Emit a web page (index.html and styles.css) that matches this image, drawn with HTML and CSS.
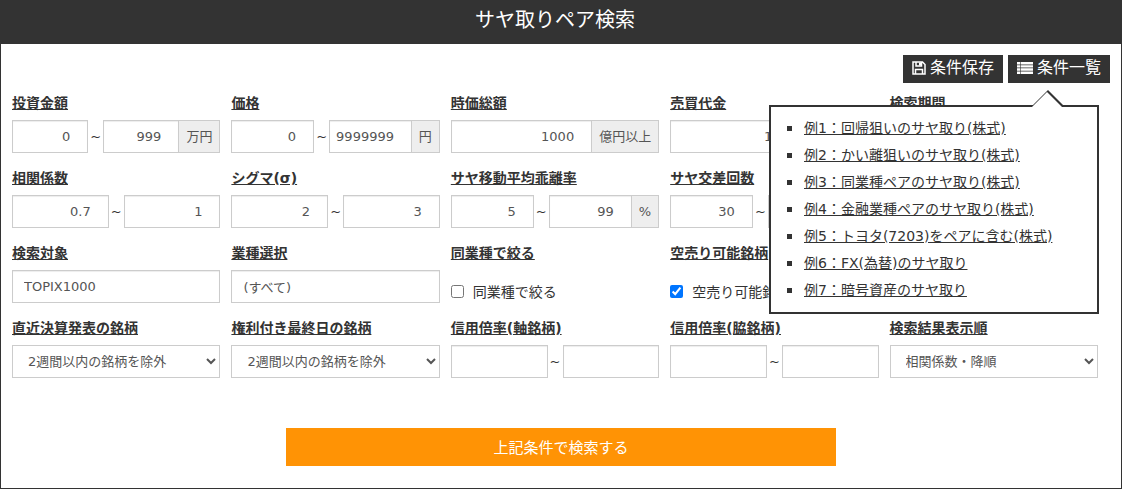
FILE: index.html
```
<!DOCTYPE html>
<html lang="ja">
<head>
  <meta charset="UTF-8">
  <meta name="viewport" content="width=device-width, initial-scale=1.0">
  <title>サヤ取りペア検索</title>
  <link rel="stylesheet" href="styles.css">
</head>
<body>
  <form class="panel">
    <h1 class="panel-title">サヤ取りペア検索</h1>

    <div class="toolbar">
      <button type="button" class="tool-btn">
        <svg class="icon-save" viewBox="0 0 14 14" aria-hidden="true">
          <path d="M1 1h9.500L13 3.500V13H1z M4 1v4h5.500V1 M3.500 13V8.500h7V13" fill="none" stroke="currentColor" stroke-width="1.500"/>
          <path d="M7 1.500h2v3H7z" fill="currentColor"/>
        </svg>
        条件保存
      </button>
      <div class="menu">
        <button type="button" class="tool-btn" aria-expanded="true">
          <svg class="icon-list" viewBox="0 0 16 12" aria-hidden="true">
            <path d="M0 0h3v2.500H0z M3.600 0H16v2.500H3.600z M0 3.200h3v2.400H0z M3.600 3.200H16v2.400H3.600z M0 6.300h3v2.400H0z M3.600 6.300H16v2.400H3.600z M0 9.400h3V12H0z M3.600 9.400H16V12H3.600z" fill="currentColor"/>
          </svg>
          条件一覧
        </button>
        <ul class="popup">
          <li><a href="#">例1：回帰狙いのサヤ取り(株式)</a></li>
          <li><a href="#">例2：かい離狙いのサヤ取り(株式)</a></li>
          <li><a href="#">例3：同業種ペアのサヤ取り(株式)</a></li>
          <li><a href="#">例4：金融業種ペアのサヤ取り(株式)</a></li>
          <li><a href="#">例5：トヨタ(7203)をペアに含む(株式)</a></li>
          <li><a href="#">例6：FX(為替)のサヤ取り</a></li>
          <li><a href="#">例7：暗号資産のサヤ取り</a></li>
        </ul>
      </div>
    </div>

    <div class="row">
      <div class="field">
        <label class="caption" for="amount-min">投資金額</label>
        <div class="group">
          <input class="control num" id="amount-min" type="text" value="0">
          <span class="tilde">~</span>
          <input class="control num" type="text" value="999" aria-label="投資金額 上限">
          <span class="unit">万円</span>
        </div>
      </div>
      <div class="field">
        <label class="caption" for="price-min">価格</label>
        <div class="group">
          <input class="control num" id="price-min" type="text" value="0">
          <span class="tilde">~</span>
          <input class="control num" type="text" value="9999999" aria-label="価格 上限">
          <span class="unit">円</span>
        </div>
      </div>
      <div class="field">
        <label class="caption" for="cap">時価総額</label>
        <div class="group">
          <input class="control num" id="cap" type="text" value="1000">
          <span class="unit">億円以上</span>
        </div>
      </div>
      <div class="field">
        <label class="caption" for="turnover">売買代金</label>
        <div class="group">
          <input class="control num" id="turnover" type="text" value="10">
          <span class="unit">百万円以上</span>
        </div>
      </div>
      <div class="field">
        <label class="caption" for="period">検索期間</label>
        <select class="control" id="period">
          <option>1年</option>
        </select>
      </div>
    </div>

    <div class="row">
      <div class="field">
        <label class="caption" for="corr-min">相関係数</label>
        <div class="group">
          <input class="control num" id="corr-min" type="text" value="0.7">
          <span class="tilde">~</span>
          <input class="control num" type="text" value="1" aria-label="相関係数 上限">
        </div>
      </div>
      <div class="field">
        <label class="caption" for="sigma-min">シグマ(σ)</label>
        <div class="group">
          <input class="control num" id="sigma-min" type="text" value="2">
          <span class="tilde">~</span>
          <input class="control num" type="text" value="3" aria-label="シグマ 上限">
        </div>
      </div>
      <div class="field">
        <label class="caption" for="gap-min">サヤ移動平均乖離率</label>
        <div class="group">
          <input class="control num" id="gap-min" type="text" value="5">
          <span class="tilde">~</span>
          <input class="control num" type="text" value="99" aria-label="サヤ移動平均乖離率 上限">
          <span class="unit">%</span>
        </div>
      </div>
      <div class="field">
        <label class="caption" for="cross-min">サヤ交差回数</label>
        <div class="group">
          <input class="control num" id="cross-min" type="text" value="30">
          <span class="tilde">~</span>
          <input class="control num" type="text" aria-label="サヤ交差回数 上限">
          <span class="unit">回</span>
        </div>
      </div>
    </div>

    <div class="row">
      <div class="field">
        <label class="caption" for="target">検索対象</label>
        <input class="control" id="target" type="text" value="TOPIX1000">
      </div>
      <div class="field">
        <label class="caption" for="sector">業種選択</label>
        <input class="control" id="sector" type="text" value="(すべて)">
      </div>
      <div class="field">
        <span class="caption">同業種で絞る</span>
        <label class="check"><input type="checkbox">同業種で絞る</label>
      </div>
      <div class="field">
        <span class="caption">空売り可能銘柄</span>
        <label class="check"><input type="checkbox" checked>空売り可能銘柄</label>
      </div>
    </div>

    <div class="row">
      <div class="field">
        <label class="caption" for="earnings">直近決算発表の銘柄</label>
        <select class="control" id="earnings">
          <option>2週間以内の銘柄を除外</option>
        </select>
      </div>
      <div class="field">
        <label class="caption" for="rights">権利付き最終日の銘柄</label>
        <select class="control" id="rights">
          <option>2週間以内の銘柄を除外</option>
        </select>
      </div>
      <div class="field">
        <label class="caption" for="margin-a">信用倍率(軸銘柄)</label>
        <div class="group">
          <input class="control num" id="margin-a" type="text">
          <span class="tilde">~</span>
          <input class="control num" type="text" aria-label="信用倍率(軸銘柄) 上限">
        </div>
      </div>
      <div class="field">
        <label class="caption" for="margin-b">信用倍率(脇銘柄)</label>
        <div class="group">
          <input class="control num" id="margin-b" type="text">
          <span class="tilde">~</span>
          <input class="control num" type="text" aria-label="信用倍率(脇銘柄) 上限">
        </div>
      </div>
      <div class="field">
        <label class="caption" for="order">検索結果表示順</label>
        <select class="control" id="order">
          <option>相関係数・降順</option>
        </select>
      </div>
    </div>

    <button type="submit" class="submit-btn">上記条件で検索する</button>
  </form>
</body>
</html>
```
FILE: styles.css
```
* {
  box-sizing: border-box;
}

body {
  margin: 0;
  font-family: "DejaVu Sans", "Noto Sans CJK JP", sans-serif;
  font-size: 14px;
  line-height: 20px;
  color: #333;
  background: #fff;
}

button,
input,
select {
  font-family: inherit;
}

.panel {
  border: 1px solid #333;
  padding-bottom: 22px;
}

.panel-title {
  margin: 0;
  padding: 4px 12px 9px 0;
  background: #333;
  color: #fff;
  font-size: 20px;
  font-weight: normal;
  line-height: 30px;
  text-align: center;
}

/* 条件保存・条件一覧 */
.toolbar {
  display: flex;
  justify-content: flex-end;
  gap: 5px;
  padding: 11px 11px 8px;
}

.tool-btn {
  display: flex;
  align-items: center;
  gap: 4px;
  height: 28px;
  padding: 0 9px 2px;
  border: none;
  background: #333;
  color: #fff;
  font-size: 16px;
  line-height: 24px;
  cursor: pointer;
}

.icon-save {
  width: 14px;
  height: 14px;
}

.icon-list {
  width: 16px;
  height: 12px;
}

.menu {
  position: relative;
}

.popup {
  position: absolute;
  z-index: 10;
  top: 50px;
  right: 11px;
  width: 330px;
  margin: 0;
  padding: 8px 0 8px 16px;
  border: 2px solid #333;
  background: #fff;
  line-height: 27px;
  list-style: none;
}

/* 吹き出しの三角 */
.popup::before,
.popup::after {
  content: "";
  position: absolute;
  border: 15px solid transparent;
  border-top: none;
}

.popup::before {
  right: 34px;
  bottom: calc(100% + 2px);
  border-bottom-color: #333;
}

.popup::after {
  right: 35px;
  bottom: 100%;
  border-bottom-color: #fff;
}

.popup li {
  display: flex;
  align-items: center;
  gap: 12px;
}

.popup li::before {
  content: "";
  width: 5px;
  height: 5px;
  background: #333;
}

.popup a {
  color: #333;
}

/* 検索条件 */
.row {
  display: grid;
  grid-template-columns: repeat(5, minmax(0, 1fr));
  gap: 11px;
  padding: 0 23px 13px 11px;
}

.caption {
  display: block;
  height: 24px;
  margin-bottom: 5px;
  font-weight: bold;
  line-height: 24px;
  text-decoration: underline;
}

.group {
  display: flex;
}

.control {
  width: 100%;
  height: 33px;
  padding: 0 11px;
  border: 1px solid #ccc;
  border-radius: 0;
  background: #fff;
  box-shadow: inset 0 1px 1px rgba(0, 0, 0, 0.075);
  color: #555;
  font-size: 13px;
}

select.control {
  padding: 0 4px 0 11px;
  box-shadow: none;
}

.num {
  flex: 1;
  min-width: 0;
  padding: 0 17px 0 6px;
  text-align: right;
}

.tilde {
  flex: none;
  width: 15px;
  font-size: 13px;
  line-height: 33px;
  text-align: center;
}

.unit {
  flex: none;
  padding: 0 7px;
  border: 1px solid #ccc;
  border-left: none;
  background: #eee;
  color: #555;
  font-size: 13px;
  line-height: 31px;
}

.check {
  display: flex;
  align-items: center;
  gap: 9px;
  height: 33px;
  padding-top: 10px;
}

.check input {
  width: 13px;
  height: 13px;
  margin: 0;
}

.submit-btn {
  display: block;
  width: 100%;
  max-width: 550px;
  height: 38px;
  margin: 37px auto 0;
  padding: 0 0 2px;
  border: none;
  background: #ff9305;
  color: #fff;
  font-size: 15px;
  cursor: pointer;
}
```
